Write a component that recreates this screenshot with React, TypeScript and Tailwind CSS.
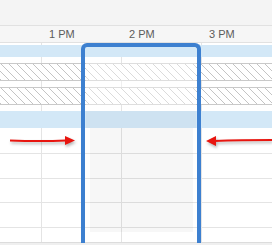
import React from 'react'

const hours = ['1 PM', '2 PM', '3 PM']

function Hatch() {
  return (
    <div className="h-[18px] border-y border-[#c9c9c9] bg-white bg-[repeating-linear-gradient(45deg,#c4c4c4_0_1px,transparent_1px_5.66px)]" />
  )
}

function Row({ h }: { h: string }) {
  return <div className={`${h} border-b border-[#e4e4e4]`} />
}

export default function App() {
  return (
    <div className="relative w-[272px] h-[245px] overflow-hidden bg-[#efefef] font-['Liberation_Sans',Arial,sans-serif]">
      {/* toolbar strip */}
      <div className="h-[26px] bg-[#f4f4f4] border-b border-[#e1e1e1]" />

      {/* hour header */}
      <div className="flex h-[17px] bg-[#f6f6f6] border-b border-[#e1e1e1] text-[11px] leading-[16px] text-[#5c5c5c]">
        <div className="w-[41px] shrink-0" />
        {hours.map(h => (
          <div key={h} className="w-[80px] shrink-0 pl-[8px]">{h}</div>
        ))}
      </div>

      {/* grid body */}
      <div className="flex flex-col bg-white bg-[linear-gradient(90deg,#e4e4e4_1px,transparent_1px)] bg-[length:80px_100%] bg-[position:41px_0]">
        <div className="h-[2px]" />
        <div className="h-[12px] bg-[#d3e8f7]" />
        <div className="h-[6px]" />
        <Hatch />
        <div className="h-[6px]" />
        <Hatch />
        <div className="h-[6px]" />
        <div className="h-[17px] bg-[#d3e8f7]" />
        <Row h="h-[26px]" />
        <Row h="h-[25px]" />
        <Row h="h-[24px]" />
        <Row h="h-[25px]" />
        <div className="h-[15px] border-b border-[#dcdcdc]" />
      </div>

      {/* selection shade */}
      <div className="absolute left-[86px] top-[63px] w-[110px] h-[42px] bg-white/40" />
      <div className="absolute left-[86px] top-[111px] w-[110px] h-[17px] bg-black/[0.025]" />
      <div className="absolute left-[90px] top-[128px] w-[103px] h-[104px] bg-black/[0.03]" />

      {/* selection outline */}
      <div className="absolute left-[81px] top-[43px] w-[120px] h-[200px] border-[4px] border-b-0 border-[#3d80d0] rounded-t-[6px]" />

      {/* arrows */}
      <svg className="absolute left-0 top-[130px] drop-shadow-[1px_2px_1.5px_rgba(0,0,0,0.3)]" width="80" height="22" viewBox="0 0 80 22">
        <path d="M10 10.5 Q40 11.5 66 10.5" stroke="#e8150f" strokeWidth="2" fill="none" />
        <polygon points="65,6 75,10.5 65,15" fill="#e8150f" />
      </svg>
      <svg className="absolute left-[200px] top-[130px] drop-shadow-[1px_2px_1.5px_rgba(0,0,0,0.3)]" width="72" height="22" viewBox="0 0 72 22">
        <path d="M14 11 Q40 10 72 10" stroke="#e8150f" strokeWidth="2" fill="none" />
        <polygon points="16,6 6,11 16,16" fill="#e8150f" />
      </svg>
    </div>
  )
}
